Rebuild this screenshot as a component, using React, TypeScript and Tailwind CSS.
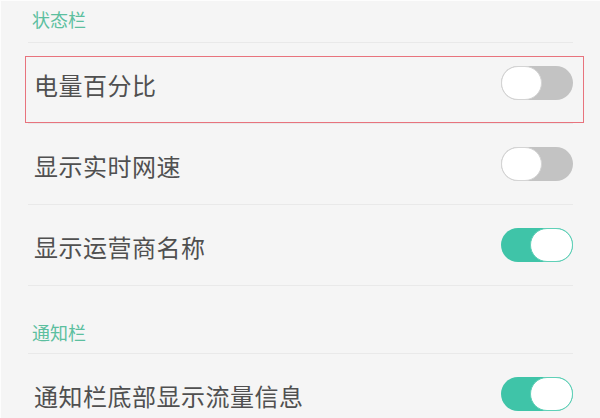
import { useState } from "react";

interface ToggleProps {
    on: boolean;
    onClick: () => void;
}

function Toggle({ on, onClick }: ToggleProps) {
    return (
        <button
            onClick={onClick}
            className={`${on ? "bg-[#3fc4a8] justify-end" : "bg-[#c3c3c3] justify-start"} flex w-[72px] h-[34px] rounded-full shrink-0`}
        >
            <span
                className={`${on ? "w-[43px] border-[#5fd0b7]" : "w-[41px] border-[#d4d4d4]"} h-full rounded-full bg-white border-[1.5px] block`}
            />
        </button>
    );
}

function Divider() {
    return <div className="h-px bg-[#e9e9e9]" />;
}

interface Item {
    label: string;
    on: boolean;
}

export default function App() {
    const [statusItems, setStatusItems] = useState<Item[]>([
        { label: "电量百分比", on: false },
        { label: "显示实时网速", on: false },
        { label: "显示运营商名称", on: true },
    ]);
    const [notifyOn, setNotifyOn] = useState(true);

    const flip = (i: number) => {
        setStatusItems(prev => prev.map((it, idx) => idx === i ? { ...it, on: !it.on } : it));
    };

    return (
        <div
            className="relative w-[600px] h-[418px] overflow-hidden bg-[#f5f5f5] border-l border-t border-[#fdfdfd]"
            style={{ fontFamily: '"Noto Sans CJK SC", "Noto Sans", sans-serif' }}
        >
            <div className="px-[27px]">
                {/* 状态栏 */}
                <div className="h-[41px] pt-[6px] pl-[4px] text-[18px] leading-[24px] text-[#5cbf9f]">
                    状态栏
                </div>
                <Divider />

                {statusItems.map((item, i) => (
                    <div key={item.label}>
                        <div className="h-[80px] flex items-center justify-between pl-[6px]">
                            <span className="text-[24px] tracking-[0.5px] text-[#505050] pt-[3px]">{item.label}</span>
                            <Toggle on={item.on} onClick={() => flip(i)} />
                        </div>
                        <Divider />
                    </div>
                ))}

                {/* 通知栏 */}
                <div className="h-[67px] pt-[34px] pl-[4px] text-[18px] leading-[24px] text-[#5cbf9f]">
                    通知栏
                </div>
                <Divider />
                <div className="h-[80px] flex items-center justify-between pl-[6px]">
                    <span className="text-[24px] tracking-[0.5px] text-[#505050] pt-[3px]">通知栏底部显示流量信息</span>
                    <Toggle on={notifyOn} onClick={() => setNotifyOn(v => !v)} />
                </div>
            </div>

            {/* highlight box over the first row */}
            <div className="absolute left-[24px] top-[55px] w-[559px] h-[67px] border-[1.5px] border-[#e8737d] pointer-events-none" />
        </div>
    );
}
